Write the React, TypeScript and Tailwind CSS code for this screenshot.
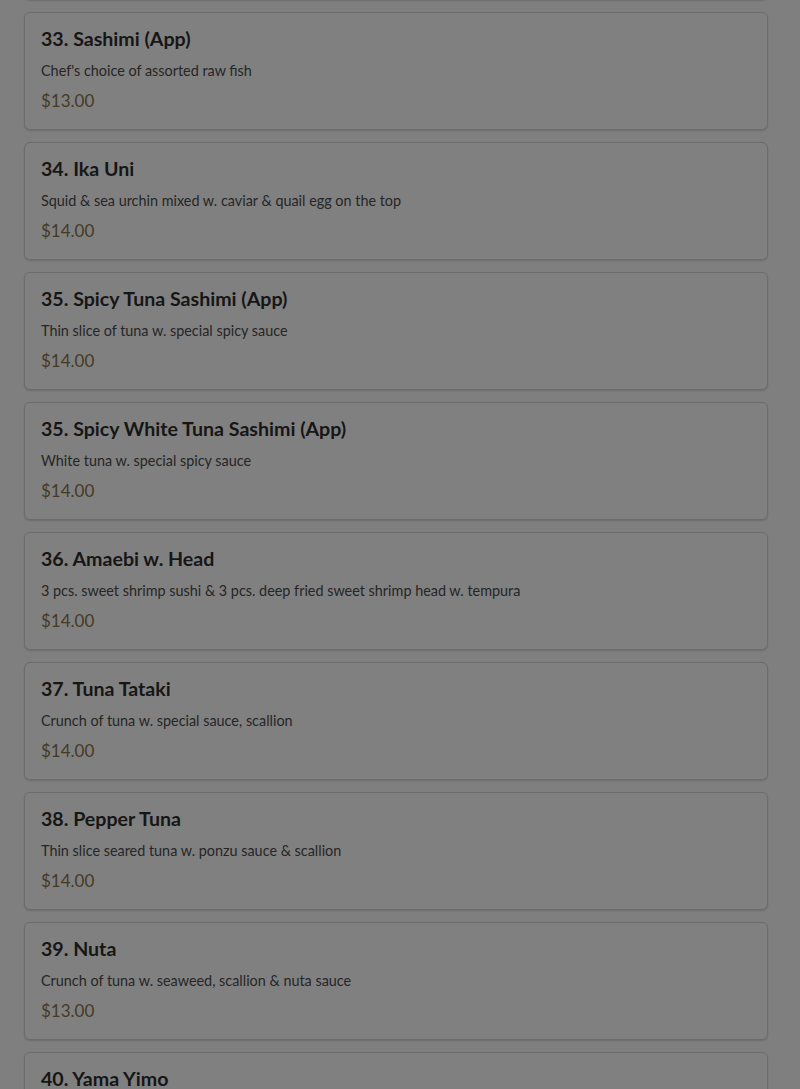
type Item = { name: string; desc?: string; price?: string }

const items: Item[] = [
  { name: '33. Sashimi (App)', desc: "Chef's choice of assorted raw fish", price: '$13.00' },
  { name: '34. Ika Uni', desc: 'Squid & sea urchin mixed w. caviar & quail egg on the top', price: '$14.00' },
  { name: '35. Spicy Tuna Sashimi (App)', desc: 'Thin slice of tuna w. special spicy sauce', price: '$14.00' },
  { name: '35. Spicy White Tuna Sashimi (App)', desc: 'White tuna w. special spicy sauce', price: '$14.00' },
  { name: '36. Amaebi w. Head', desc: '3 pcs. sweet shrimp sushi & 3 pcs. deep fried sweet shrimp head w. tempura', price: '$14.00' },
  { name: '37. Tuna Tataki', desc: 'Crunch of tuna w. special sauce, scallion', price: '$14.00' },
  { name: '38. Pepper Tuna', desc: 'Thin slice seared tuna w. ponzu sauce & scallion', price: '$14.00' },
  { name: '39. Nuta', desc: 'Crunch of tuna w. seaweed, scallion & nuta sauce', price: '$13.00' },
  { name: '40. Yama Yimo' },
]

const cardBox =
  'h-[118px] shrink-0 rounded-md border border-[#6c6c6c] bg-[#808080] shadow-[0_1px_2px_rgba(0,0,0,0.15)]'

function MenuCard({ name, desc, price }: Item) {
  return (
    <div className={cardBox + ' px-4 pt-3'}>
      <h3 className="text-[19.6px] font-bold leading-7 text-[#161616]">{name}</h3>
      {desc && <p className="mt-2 text-[14.4px] leading-5 text-[#262626]">{desc}</p>}
      {price && <p className="mt-2 text-[17px] leading-6 text-[#463a24]">{price}</p>}
    </div>
  )
}

export default function App() {
  return (
    <div className="h-[1089px] overflow-hidden bg-[#7f7f7f] font-['Lato',sans-serif]">
      <div className="-mt-[118px] flex flex-col gap-3 pl-6 pr-8">
        {/* previous card, scrolled off above */}
        <div className={cardBox} />
        {items.map((item, i) => (
          <MenuCard key={i} {...item} />
        ))}
      </div>
    </div>
  )
}
